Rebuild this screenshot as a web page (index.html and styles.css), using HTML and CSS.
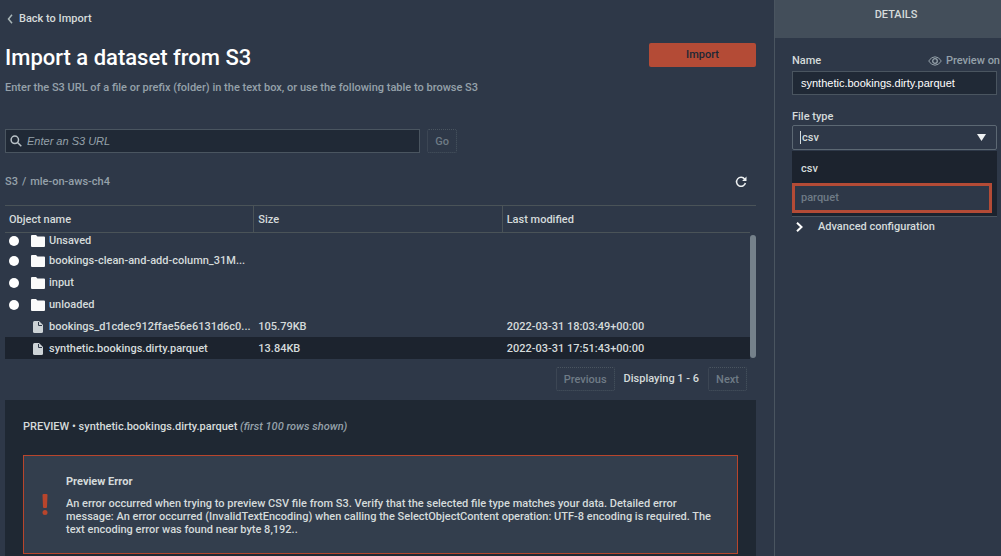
FILE: index.html
```html
<!DOCTYPE html>
<html lang="en">
<head>
<meta charset="utf-8">
<title>Import a dataset from S3</title>
<link rel="stylesheet" href="styles.css">
</head>
<body>
<svg class="sprite" aria-hidden="true">
  <symbol id="folder" viewBox="0 0 14 12"><path d="M0 1Q0 0 1 0H5L6.500 1.500H13Q14 1.500 14 2.500V11Q14 12 13 12H1Q0 12 0 11Z" fill="#fafafa"/></symbol>
  <symbol id="file" viewBox="0 0 10 13"><path d="M1.500 0H6L10 4V10.500Q10 12 8.500 12H1.500Q0 12 0 10.500V1.500Q0 0 1.500 0Z" fill="#cdd3d6"/><path d="M5.500 1V4.500H9" fill="none" stroke="#2e3848" stroke-width="1"/></symbol>
</svg>
<div class="app">
  <main class="main">
    <a class="back" href="#"><svg width="6" height="10" viewBox="0 0 6 10" fill="none" stroke="#aab7b8" stroke-width="1.500"><path d="M5 .8L1.500 5 5 9.200"/></svg>Back to Import</a>
    <div class="heading">
      <h1>Import a dataset from S3</h1>
      <button class="primary" type="button">Import</button>
    </div>
    <p class="intro">Enter the S3 URL of a file or prefix (folder) in the text box, or use the following table to browse S3</p>
    <form class="search">
      <div class="searchbox">
        <svg width="12" height="12" viewBox="0 0 12 12" fill="none" stroke="#b9c2c8" stroke-width="1.500"><circle cx="4.800" cy="4.800" r="3.700"/><path d="M7.500 7.500L11.300 11.300"/></svg>
        <input type="text" aria-label="S3 URL" placeholder="Enter an S3 URL">
      </div>
      <button class="ghost" type="button">Go</button>
    </form>
    <div class="crumbs">
      <nav aria-label="Breadcrumb"><a href="#">S3</a><span>/</span><a href="#">mle-on-aws-ch4</a></nav>
      <button class="icon" type="button" aria-label="Refresh"><svg width="12" height="12" viewBox="0 0 12 12"><path d="M9.700 3.200A4.500 4.500 0 1 0 10.400 7" fill="none" stroke="#eef1f2" stroke-width="1.500"/><path d="M11.500 .6V5H7.100Z" fill="#eef1f2"/></svg></button>
    </div>
    <div class="browser">
      <table>
        <thead><tr><th>Object name</th><th>Size</th><th>Last modified</th></tr></thead>
        <tbody>
          <tr class="first"><td><label class="object"><input type="radio" name="object"><svg class="folder"><use href="#folder"/></svg><span>Unsaved</span></label></td><td></td><td></td></tr>
          <tr><td><label class="object"><input type="radio" name="object"><svg class="folder"><use href="#folder"/></svg><span>bookings-clean-and-add-column_31M...</span></label></td><td></td><td></td></tr>
          <tr><td><label class="object"><input type="radio" name="object"><svg class="folder"><use href="#folder"/></svg><span>input</span></label></td><td></td><td></td></tr>
          <tr><td><label class="object"><input type="radio" name="object"><svg class="folder"><use href="#folder"/></svg><span>unloaded</span></label></td><td></td><td></td></tr>
          <tr><td><div class="object leaf"><svg class="file"><use href="#file"/></svg><span>bookings_d1cdec912ffae56e6131d6c0...</span></div></td><td>105.79KB</td><td>2022-03-31 18:03:49+00:00</td></tr>
          <tr class="selected"><td><div class="object leaf"><svg class="file"><use href="#file"/></svg><span>synthetic.bookings.dirty.parquet</span></div></td><td>13.84KB</td><td>2022-03-31 17:51:43+00:00</td></tr>
        </tbody>
      </table>
      <div class="scrollbar"></div>
    </div>
    <div class="pager">
      <button class="ghost" type="button">Previous</button>
      <span>Displaying 1 - 6</span>
      <button class="ghost" type="button">Next</button>
    </div>
    <section class="preview">
      <h2>PREVIEW • synthetic.bookings.dirty.parquet <em>(first 100 rows shown)</em></h2>
      <div class="error" role="alert">
        <svg width="6" height="22" viewBox="0 0 6 22" fill="#b8452c"><path d="M.5 1Q.5 0 1.500 0H4.500Q5.500 0 5.500 1L5 13Q5 14 4 14H2Q1 14 1 13Z"/><circle cx="3" cy="18.500" r="2.500"/></svg>
        <div>
          <h3>Preview Error</h3>
          <p>An error occurred when trying to preview CSV file from S3. Verify that the selected file type matches your data. Detailed error message: An error occurred (InvalidTextEncoding) when calling the SelectObjectContent operation: UTF-8 encoding is required. The text encoding error was found near byte 8,192..</p>
        </div>
      </div>
    </section>
  </main>
  <aside class="details">
    <h2>DETAILS</h2>
    <div class="fields">
      <div class="labels">
        <label for="name">Name</label>
        <span class="status"><svg width="14" height="10" viewBox="0 0 14 10" fill="none" stroke="#95a1aa"><path d="M.7 5Q3.200 .8 7 .8T13.300 5Q10.800 9.200 7 9.200T.7 5Z"/><circle cx="7" cy="5" r="2.300" stroke-width="1.300"/></svg>Preview on</span>
      </div>
      <input class="name" id="name" type="text" value="synthetic.bookings.dirty.parquet">
      <label class="typelabel" for="type">File type</label>
      <div class="picker">
        <span class="caret"></span>
        <select id="type"><option selected>csv</option><option>parquet</option></select>
        <svg class="arrow" width="9" height="7" viewBox="0 0 9 7" fill="#eef1f2"><path d="M0 0H9L4.500 7Z"/></svg>
        <ul class="menu" role="listbox" aria-label="File type">
          <li role="option" aria-selected="true">csv</li>
          <li class="marked" role="option" aria-selected="false">parquet</li>
        </ul>
      </div>
      <button class="advanced" type="button"><svg width="7" height="10" viewBox="0 0 7 10" fill="none" stroke="#fff" stroke-width="2"><path d="M1 .8L5.500 5 1 9.200"/></svg>Advanced configuration</button>
    </div>
  </aside>
</div>
</body>
</html>
```
FILE: styles.css
```css
* { box-sizing: border-box; }
body {
  margin: 0;
  background: #2e3848;
  color: #d5dbdb;
  font: 500 11px/14px Roboto, "Noto Sans", sans-serif;
}
h1, h2, h3, p, ul { margin: 0; padding: 0; }
button, input, select { font: inherit; color: inherit; margin: 0; }
a { color: inherit; text-decoration: none; }
svg { display: block; flex: none; }
.sprite { position: absolute; width: 0; height: 0; }

.app { display: flex; min-height: 100vh; overflow: hidden; }
.main { flex: 1; min-width: 0; display: flex; flex-direction: column; padding: 12px 18px 0 5px; }

.back { display: flex; align-items: center; gap: 6px; padding-left: 2px; align-self: flex-start; }
.heading { display: flex; align-items: flex-start; justify-content: space-between; margin-top: 17px; height: 30px; }
h1 { font-size: 22px; line-height: 30px; font-weight: 500; color: #fff; }
.primary { width: 107px; height: 24px; border: 0; border-radius: 2px; background: #b44b36; color: #1c2735; padding: 0; }
.intro { margin-top: 8px; color: #95a1aa; }

.search { display: flex; gap: 7px; margin-top: 34px; padding-right: 299px; }
.searchbox { flex: 1; display: flex; align-items: center; gap: 5px; height: 24px; padding-left: 4px; background: #202936; border: 1px solid #4a5560; }
.searchbox input { flex: 1; min-width: 0; height: 22px; padding: 0; border: 0; outline: 0; background: none; font-family: "Liberation Sans", sans-serif; }
.searchbox input::placeholder { color: #95a1aa; font-style: italic; opacity: 1; }
.ghost { height: 24px; padding: 1px 7px 0; background: none; border: 1px dotted #4a5560; border-radius: 2px; color: #6f7b86; }

.crumbs { display: flex; align-items: center; justify-content: space-between; margin-top: 21px; height: 16px; padding-right: 9px; color: #95a1aa; }
.crumbs nav { display: flex; gap: 4px; }
.icon { padding: 0; border: 0; background: none; }

.browser { display: flex; margin-top: 15px; border-top: 1px solid #4a5358; }
table { flex: 1; width: 100%; table-layout: fixed; border-collapse: separate; border-spacing: 0; }
th { height: 27px; padding: 2px 4px 0; text-align: left; font-weight: 500; border-bottom: 1px solid #4a5358; }
th + th { border-left: 1px solid #4a5358; }
td { height: 22px; padding: 2px 4px 0; line-height: 16px; white-space: nowrap; }
td + td { padding-left: 5px; }
.first td { height: 16px; padding-top: 0; }
.selected td { background: #1c232e; }
.object { display: flex; align-items: center; height: 16px; }
.object input { appearance: none; width: 10px; height: 10px; border-radius: 50%; background: #fff; margin-right: 12px; }
.folder { width: 14px; height: 12px; margin-right: 4px; }
.file { width: 10px; height: 13px; margin-right: 6px; }
.leaf { padding-left: 24px; }
.scrollbar { flex: none; width: 6px; margin: 29px 0 1px; border-radius: 3px; background: #75818b; }

.pager { display: flex; align-items: center; justify-content: flex-end; gap: 9px; margin-top: 8px; padding-right: 9px; }

.preview { flex: 1; margin-top: 9px; padding: 19px 18px 3px; background: #1f2833; }
.preview h2 { font-size: 11px; line-height: 16px; font-weight: 500; }
.preview em { color: #95a1aa; }
.error { display: flex; align-items: center; gap: 18px; margin-top: 20px; padding: 18px 20px 17px 18px; border: 1px solid #b8452c; background: #333e4d; }
.error h3 { font-size: 11px; line-height: 16px; font-weight: 700; }
.error p { margin-top: 7px; line-height: 13px; }

.details { flex: 0 0 227px; min-width: 0; border-left: 1px solid #4a5560; }
.details h2 { height: 38px; padding: 8px 0 0 16px; background: #434e5a; font-size: 11px; line-height: 14px; font-weight: 500; text-align: center; }
.fields { display: flex; flex-direction: column; padding: 16px 4px 0 17px; }
.labels { display: flex; justify-content: space-between; white-space: nowrap; margin-right: -3px; }
.status { display: flex; align-items: center; gap: 4px; color: #95a1aa; }
.name { width: 100%; height: 24px; margin-top: 3px; padding: 0 8px; background: #202936; border: 1px solid #4a5560; color: #fff; font-family: "Liberation Sans", sans-serif; }
.typelabel { margin-top: 15px; }
.picker { position: relative; margin-top: 1px; }
.picker select { appearance: none; display: block; width: 100%; height: 25px; padding: 1px 9px 0; border: 1px solid #5c6873; border-radius: 2px; background: #2e3848; }
.caret { position: absolute; left: 8px; top: 6px; width: 1px; height: 13px; background: #d5dbdb; }
.arrow { position: absolute; right: 11px; top: 9px; }
.menu { position: absolute; top: 26px; left: 0; right: 0; list-style: none; background: #1c232e; border-bottom: 1px solid #4a5560; padding-bottom: 3px; }
.menu li { height: 32px; padding: 0 9px; line-height: 36px; }
.menu .marked { height: 30px; margin-right: 5px; padding: 0 6px; border: 3px solid #b44b36; background: #2e3848; color: #6f7b86; line-height: 24px; }
.advanced { display: flex; align-items: center; gap: 15px; align-self: flex-start; margin-top: 70px; padding: 0 0 0 4px; border: 0; background: none; }
```
